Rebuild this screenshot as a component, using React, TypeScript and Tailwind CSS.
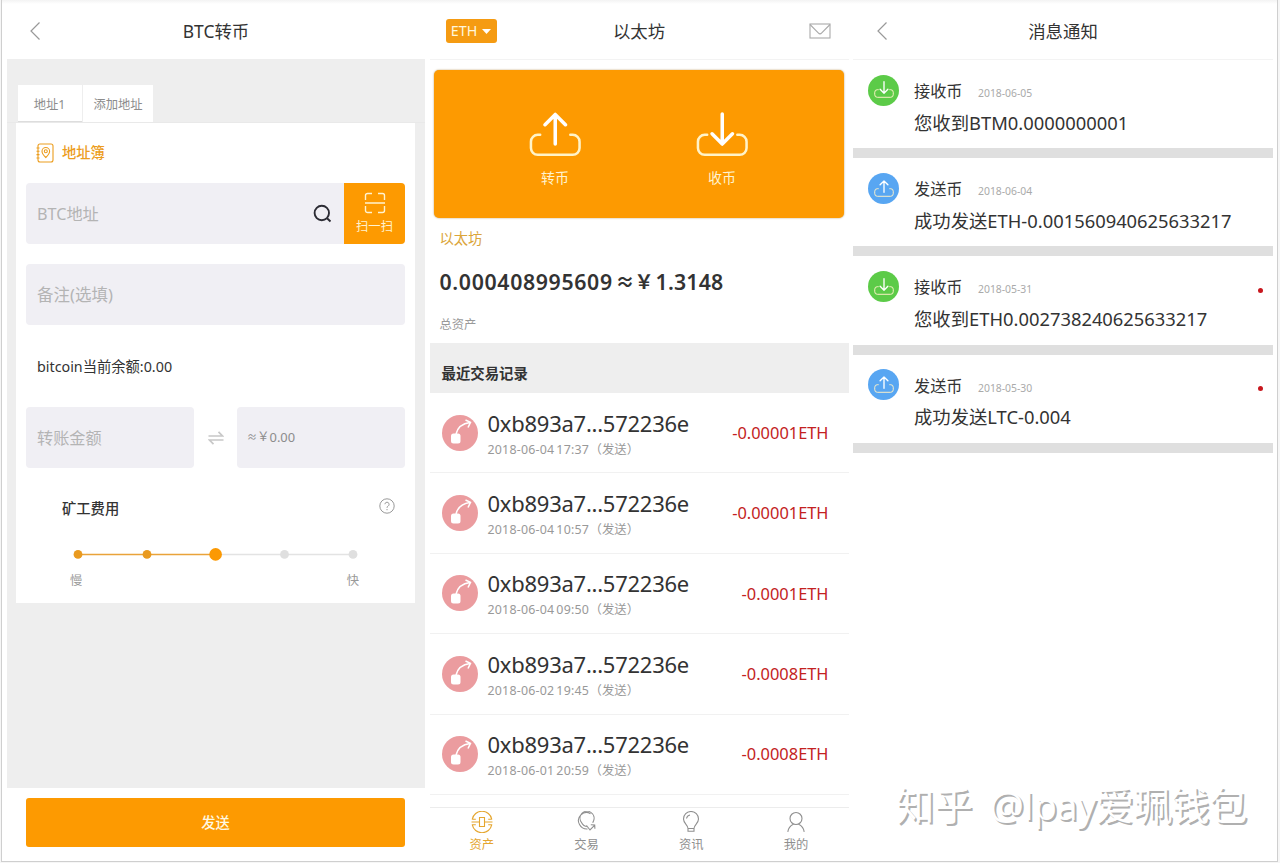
import { ReactNode } from 'react';
import clsx from 'clsx';

const transactions = [
  { date: '2018-06-04 17:37', amount: '-0.00001ETH' },
  { date: '2018-06-04 10:57', amount: '-0.00001ETH' },
  { date: '2018-06-04 09:50', amount: '-0.0001ETH' },
  { date: '2018-06-02 19:45', amount: '-0.0008ETH' },
  { date: '2018-06-01 20:59', amount: '-0.0008ETH' },
];

const messages = [
  { type: 'receive', date: '2018-06-05', text: '您收到BTM0.0000000001', unread: false },
  { type: 'send', date: '2018-06-04', text: '成功发送ETH-0.001560940625633217', unread: false },
  { type: 'receive', date: '2018-05-31', text: '您收到ETH0.002738240625633217', unread: true },
  { type: 'send', date: '2018-05-30', text: '成功发送LTC-0.004', unread: true },
];

const BackIcon = () => (
  <svg width="12" height="20" viewBox="0 0 12 20" fill="none" stroke="#999" strokeWidth="1.2">
    <path d="M10.5 1.5 2 10l8.5 8.5" />
  </svg>
);

const TrayIcon = ({ up, size, stroke }: { up: boolean; size: number; stroke: number }) => (
  <svg width={size} height={(size * 46) / 54} viewBox="0 0 54 46" fill="none" stroke="#fff" strokeWidth={stroke} strokeLinecap="round" strokeLinejoin="round">
    <path d="M11.5 23.5H9a7 7 0 0 0-7 7V37a7 7 0 0 0 7 7h36a7 7 0 0 0 7-7v-6.5a7 7 0 0 0-7-7h-2.5" stroke="#fff3c8" />
    {up ? <path d="M27 33V2.5M16.5 13 27 2.5 37.500 13" strokeWidth={stroke * 1.4} /> : <path d="M27 2v31M16.5 22.5 27 33l10.500-10.500" strokeWidth={stroke * 1.4} />}
  </svg>
);

const Header = ({ left, title, right, border }: { left: ReactNode; title: string; right?: ReactNode; border?: boolean }) => (
  <header className={clsx('grid shrink-0 grid-cols-[1fr_auto_1fr] items-center pt-[3px]', border ? 'h-[60px] border-b border-[#f3f3f3]' : 'h-[59px]')}>
    <div className="flex">{left}</div>
    <h1 className="text-[17.4px] leading-6 text-[#333]">{title}</h1>
    <div className="flex justify-end">{right}</div>
  </header>
);

const FeeSlider = () => (
  <svg width="290" height="14" viewBox="0 0 290 14">
    <path d="M146 7.5h137" stroke="#e3e3e3" strokeWidth="1.3" />
    <path d="M8 7.5h138" stroke="#e9a33a" strokeWidth="1.3" />
    <circle cx="8" cy="7.4" r="4.4" fill="#e99a1f" />
    <circle cx="77" cy="7.4" r="4.4" fill="#e99a1f" />
    <circle cx="145.6" cy="7.4" r="6.3" fill="#fb9903" />
    <circle cx="214.5" cy="7.4" r="4.4" fill="#dfdfdf" />
    <circle cx="283" cy="7.4" r="4.4" fill="#dfdfdf" />
  </svg>
);

const TransferScreen = () => (
  <section className="flex w-[418px] flex-col">
    <Header
      title="BTC转币"
      left={<div className="pl-[22px]"><BackIcon /></div>}
    />
    <main className="flex h-[728.5px] flex-col bg-[#eeeeee] pt-[26px]">
      <div className="flex h-[38px] gap-px border-b border-[#e9e9e9] pl-[11px] text-[12.3px] text-[#8c8c8c]">
        <div className="flex h-[37px] w-[64px] items-center justify-center border-b border-[#ddd] bg-white pr-px pt-[4px]">地址1</div>
        <div className="flex h-[37px] w-[70px] items-center justify-center bg-white pt-[3px]">添加地址</div>
      </div>
      <div className="mx-[9px] mr-[10px] flex h-[480px] flex-col bg-white px-[10px]">
        <div className="flex h-[59px] items-center gap-2 pl-[10px] text-[14.3px] font-medium text-[#ec9d1e]">
          <svg width="18" height="20" viewBox="0 0 18 20" fill="none" stroke="currentColor" strokeWidth="1.1">
            <rect x="2" y="1" width="15" height="18" rx="2" />
            <path d="M.5 5h3M.5 8.3h3M.5 11.6h3M.5 15h3M9.8 14.5S6 11 6 8.3a3.8 3.8 0 0 1 7.600 0c0 2.700-3.800 6.200-3.800 6.200Z" />
            <circle cx="9.8" cy="8.3" r="1.5" />
          </svg>
          <span className="pt-px">地址簿</span>
        </div>
        <div className="mt-px flex h-[61px] overflow-hidden rounded-sm bg-[#f0eff4]">
          <div className="flex grow items-center justify-between pl-[11px] pr-3">
            <span className="pt-px text-[16.2px] text-[#b4b4b4]">BTC地址</span>
            <svg width="19" height="19" viewBox="0 0 19 19" fill="none" stroke="#2c2c34" strokeWidth="1.9">
              <circle cx="8.8" cy="9" r="7.2" />
              <path d="m13.8 14 3.7 3.5" />
            </svg>
          </div>
          <button className="flex w-[61px] flex-col items-center bg-[#fd9a01] pt-[9px] text-[12.3px] leading-[18px] text-[#fff3d0]">
            <svg width="22" height="22" viewBox="0 0 22 22" fill="none" stroke="currentColor" strokeWidth="1.4">
              <path d="M8 1.5H3.5a2 2 0 0 0-2 2V8M14 1.5h4.5a2 2 0 0 1 2 2V8M8 20.5H3.5a2 2 0 0 1-2-2V14M14 20.5h4.5a2 2 0 0 0 2-2V14M1 11h20" />
            </svg>
            <span className="mt-1">扫一扫</span>
          </button>
        </div>
        <div className="mt-5 flex h-[61px] items-center rounded-sm bg-[#f0eff4] pl-[11px] pt-[2px] text-[16.5px] text-[#b4b4b4]">备注(选填)</div>
        <div className="flex h-[82px] items-center pl-[11px] pt-px text-[14.3px] text-[#333]">bitcoin当前余额:0.00</div>
        <div className="flex h-[61px] items-center">
          <div className="flex h-full w-[168px] items-center rounded-sm bg-[#f0eff4] pl-[11px] pt-px text-[16.2px] text-[#b4b4b4]">转账金额</div>
          <div className="flex w-[43px] justify-center">
            <svg width="16" height="16" viewBox="0 0 16 16" fill="none" stroke="#c8c8c8" strokeWidth="1.7">
              <path d="M.5 6h14L10.5 1.8M15.5 10h-14l4 4.2" />
            </svg>
          </div>
          <div className="flex h-full w-[168px] items-center rounded-sm bg-[#f0eff4] pl-[10px] text-[#8c8c8c]">
            <span className="w-[10px] text-[10px]">≈</span>
            <span className="text-[12.5px]">￥</span>
            <span className="text-[12.9px]">0.00</span>
          </div>
        </div>
        <div className="mt-[27px] flex h-6 items-center justify-between pl-9 pr-[10px] text-[14.3px] font-medium text-[#333]">
          <span className="pt-1">矿工费用</span>
          <svg width="16" height="16" viewBox="0 0 16 16" className="mb-[2px]" fill="none" stroke="#999" strokeWidth="1">
            <circle cx="8" cy="8" r="7.2" />
            <path d="M5.9 6.2a2.1 2.1 0 1 1 3.2 1.9C8.3 8.6 8 8.9 8 9.8M8 11v1.2" />
          </svg>
        </div>
        <div className="mt-7 pl-[44px]"><FeeSlider /></div>
        <div className="mt-[11px] flex justify-between pl-[44px] pr-[46px] text-[12.3px] leading-[18px] text-[#999]">
          <span>慢</span>
          <span>快</span>
        </div>
      </div>
    </main>
    <footer className="px-[19px] pr-5 pt-[10px]">
      <button className="h-[49px] w-full rounded-[3px] bg-[#fd9a01] pt-px text-[14.3px] font-medium text-[#fff8e0]">发送</button>
    </footer>
  </section>
);

const TransactionRow = ({ date, amount }: { date: string; amount: string }) => (
  <div className="flex h-[80.4px] items-center border-b border-[#f1f1f1] pl-3 pr-5">
    <svg width="36" height="36" viewBox="0 0 36 36" className="shrink-0" fill="none">
      <circle cx="18" cy="18" r="18" fill="#eb9c9f" />
      <rect x="9" y="18.5" width="9.5" height="10" rx="2.5" fill="#fff" />
      <path d="M14 19c1.5-6 6-10.5 14-11.5M23.5 5l5 2.3-2.5 5.2" stroke="#fff" strokeWidth="1.5" />
    </svg>
    <div className="grow pl-[10px] pt-[5px]">
      <div className="text-[22px] leading-7 tracking-[-0.25px] text-[#333]">0xb893a7...572236e</div>
      <div className="flex items-center whitespace-nowrap pt-px text-[12.4px] leading-6 text-[#999]">
        <span className="w-[102px] tracking-[0.22px] [word-spacing:-1.5px]">{date}</span>
        <span>（发送）</span>
      </div>
    </div>
    <div className="pt-px text-[16.4px] text-[#c32222]">{amount}</div>
  </div>
);

const tabs = [
  {
    label: '资产',
    icon: <path d="M1.2 8.3a10 10 0 0 1 19.6 0M1.2 13.7a10 10 0 0 0 19.6 0M.5 11H8M14 11h7.5M8.5 6.5h5v9h-5zM.8 8.3h4M17.2 8.3h4M.8 13.7h4M17.2 13.7h4" />,
  },
  {
    label: '交易',
    icon: <path d="M14.5 2.7A8 8 0 0 0 3.5 13.5a8.5 8.5 0 0 0 8 4.5M5.5 11.5A7 7 0 1 1 17.5 10M5.5 11.5a7 7 0 0 0 6 4M17.5 10l-.8 1.8M10.5 14.5l3.5 4.5 4.5-4.7M14.8 13.8l3.9.2.2 3.8" />,
  },
  {
    label: '资讯',
    icon: <path d="M8 17.5c0-3.5-4.5-5-4.5-9.5a7.5 7.5 0 0 1 15 0c0 4.5-4.5 6-4.5 9.5zM8 17.5v2.8h6v-2.8M6.5 7.5A4.5 4.5 0 0 1 10 4" />,
  },
  {
    label: '我的',
    icon: <path d="M11 1.5a6 6 0 1 1 0 12 6 6 0 0 1 0-12ZM2.8 20.8c.6-4 3-6.4 5.4-7.6M19.2 20.8c-.6-4-3-6.4-5.4-7.6" />,
  },
];

const WalletScreen = () => (
  <section className="flex w-[419px] flex-col">
    <Header
      title="以太坊"
      border
      left={
        <button className="ml-4 flex h-6 w-[51px] items-center justify-center gap-[5px] rounded-[3px] bg-[#f59b12] text-[14.3px] text-[#fff6dc]">
          ETH
          <svg width="9" height="5" viewBox="0 0 9 5" fill="#fff"><path d="M0 0h9L4.500 5z" /></svg>
        </button>
      }
      right={
        <svg className="mr-[18px]" width="22" height="16" viewBox="0 0 22 16" fill="none" stroke="#aaa" strokeWidth="1.1">
          <rect x="1" y="1" width="20" height="14" />
          <path d="m1 1.5 8.5 8.7a2 2 0 0 0 3 0L21 1.5" />
        </svg>
      }
    />
    <div className="ml-1 mr-[5px] mt-[10px] flex h-[148px] justify-center gap-[115px] rounded-[5px] bg-[#fd9a01] pt-[42px] text-[14px] leading-5 text-[#fff3d0] shadow-[0_0_2px_#b99a60]">
      <div className="flex w-[52px] flex-col items-center gap-[11px]">
        <TrayIcon up size={52.5} stroke={2.6} />
        <span>转币</span>
      </div>
      <div className="flex w-[52px] flex-col items-center gap-[11px]">
        <TrayIcon up={false} size={52.5} stroke={2.6} />
        <span>收币</span>
      </div>
    </div>
    <div className="flex h-[125px] flex-col pl-[10px] pt-[11px]">
      <div className="text-[14.3px] leading-5 text-[#dba53a]">以太坊</div>
      <div className="mt-[19px] flex text-[21.3px] font-semibold leading-7 text-[#333]">
        <span className="w-[176px] tracking-[0.64px]">0.000408995609</span>
        <span className="w-[19px] text-[19px]">≈</span>
        <span className="w-[21px] text-[19px]">￥</span>
        <span className="tracking-[0.2px]">1.3148</span>
      </div>
      <div className="mt-[19px] text-[12.3px] leading-5 text-[#999]">总资产</div>
    </div>
    <h2 className="flex h-[50px] items-center bg-[#eeeeee] pl-3 pt-[11px] text-[14.4px] font-bold text-[#333]">最近交易记录</h2>
    <div>
      {transactions.map((tx) => (
        <TransactionRow key={tx.date} {...tx} />
      ))}
    </div>
    <nav className="mt-3 grid h-[50px] grid-cols-4 border-t border-[#ececec]">
      {tabs.map((tab, i) => (
        <div key={tab.label} className={clsx('flex flex-col items-center pt-[3px] text-[12.3px] leading-[18px]', i === 0 ? 'text-[#e5a62f]' : 'text-[#8f8f8f]')}>
          <svg width="22" height="22" viewBox="0 0 22 22" fill="none" stroke="currentColor" strokeWidth="1.1">
            {tab.icon}
          </svg>
          <span className="mt-[3px]">{tab.label}</span>
        </div>
      ))}
    </nav>
  </section>
);

const MessageScreen = () => (
  <section className="flex w-[420px] flex-col">
    <Header title="消息通知" border left={<div className="pl-[23px]"><BackIcon /></div>} />
    {messages.map((msg) => {
      const isSend = msg.type === 'send';
      return (
        <div key={msg.date} className="flex h-[98.2px] border-b-[10px] border-[#dfdfdf] pl-[15px] pr-[10px] pt-[14px]">
          <div className={clsx('mt-[0.5px] flex size-[31px] shrink-0 items-center justify-center rounded-full', isSend ? 'bg-[#58a6f2]' : 'bg-[#5ccb48]')}>
            <TrayIcon up={isSend} size={20} stroke={2.6} />
          </div>
          <div className="grow pl-[15px] pt-[3px]">
            <div className="flex items-center leading-6">
              <span className="w-16 text-[16.2px] text-[#333]">{isSend ? '发送币' : '接收币'}</span>
              <span className="pt-1 text-[10.4px] text-[#aaa]">{msg.date}</span>
            </div>
            <div className="mt-[3.5px] text-[18.35px] leading-7 text-[#333]">{msg.text}</div>
          </div>
          {msg.unread && <div className="mt-[17.5px] size-[5px] shrink-0 rounded-full bg-[#c8171e]" />}
        </div>
      );
    })}
    <div className="mt-auto flex h-[93px] items-center gap-[17px] whitespace-nowrap pb-4 pl-[43px] font-['Open_Sans','Noto_Sans_CJK_SC',sans-serif] text-[38.3px] text-white [text-shadow:2px_2px_0_#b0b0b0]">
      <span>知乎</span>
      <span className="tracking-[-0.6px]">@Ipay爱珮钱包</span>
    </div>
  </section>
);

const App = () => (
  <div className="h-[863px] w-[1280px] overflow-hidden bg-[#f6f6f6] pb-px pl-px pr-[2px] font-['Noto_Sans','Noto_Sans_CJK_SC',sans-serif]">
    <div className="flex h-full gap-[4.5px] border-b border-l border-r border-[#cfcfcf] bg-[linear-gradient(#f3f3f3,#fff_4px)] pb-px pl-[5px]">
      <TransferScreen />
      <WalletScreen />
      <MessageScreen />
    </div>
  </div>
);

export default App;
